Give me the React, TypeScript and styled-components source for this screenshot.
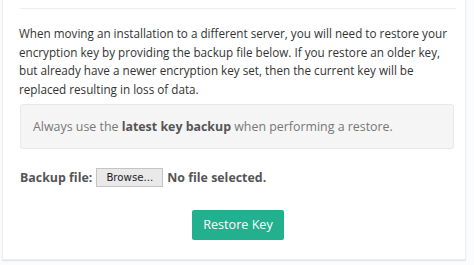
import styled, { createGlobalStyle } from "styled-components";

const GlobalStyle = createGlobalStyle`
  html, body {
    margin: 0;
    padding: 0;
    background: #eef0f3;
  }
  body {
    font-family: "Open Sans", "Liberation Sans", sans-serif;
    width: 474px;
    height: 265px;
    overflow: hidden;
  }
`;

const Page = styled.div`
  display: flex;
  width: 474px;
  height: 265px;
  background: #fbfcfd;
`;

const Card = styled.div`
  box-sizing: border-box;
  width: 464px;
  height: 260px;
  margin-left: 2px;
  background: #ffffff;
  border: 1px solid #eceef0;
  border-top: none;
  box-shadow: 0 1px 1px #e2e5ea;
  padding: 8px 8px 0 16px;
  display: flex;
  flex-flow: column;
`;

const Divider = styled.div`
  height: 1px;
  background: #eceef0;
  margin: 0 1px 0 1px;
`;

const Intro = styled.p`
  margin: 15px 0 0 0;
  font-size: 11.7px;
  line-height: 18.7px;
  color: #333333;
`;

const Note = styled.div`
  box-sizing: border-box;
  margin: 5px 3px 0 1px;
  height: 45px;
  background: #f5f5f5;
  border: 1px solid #e8e8e8;
  border-radius: 3px;
  display: flex;
  align-items: center;
  padding-left: 12px;
  font-size: 12.4px;
  color: #777777;

  b {
    color: #555555;
    font-weight: 700;
  }
`;

const FileRow = styled.div`
  display: flex;
  align-items: center;
  margin: 19px 0 0 1px;
  font-size: 12.4px;
  font-weight: 700;
  color: #555555;
  gap: 4px;
`;

const BrowseButton = styled.span`
  box-sizing: border-box;
  height: 19px;
  width: 67px;
  display: inline-flex;
  align-items: center;
  justify-content: center;
  background: #e9e9e9;
  border: 1px solid #c4c4c4;
  font-family: "DejaVu Sans", sans-serif;
  font-weight: 400;
  font-size: 10.2px;
  color: #222222;
`;

const Actions = styled.div`
  display: flex;
  justify-content: center;
  margin-top: 23px;
`;

const RestoreButton = styled.button`
  width: 92px;
  height: 30px;
  border: none;
  border-radius: 2px;
  background: #22b08e;
  color: #ffffff;
  font-family: "Open Sans", "Liberation Sans", sans-serif;
  font-size: 12.6px;
  cursor: pointer;
`;

export default function App() {
  return (
    <>
      <GlobalStyle />
      <Page>
        <Card>
          <Divider />
          <Intro>
            When moving an installation to a different server, you will need to
            restore your encryption key by providing the backup file below. If
            you restore an older key, but already have a newer encryption key
            set, then the current key will be replaced resulting in loss of
            data.
          </Intro>
          <Note>
            <span>
              Always use the <b>latest key backup</b> when performing a restore.
            </span>
          </Note>
          <FileRow>
            <span>Backup file:</span>
            <BrowseButton>Browse...</BrowseButton>
            <span>No file selected.</span>
          </FileRow>
          <Actions>
            <RestoreButton>Restore Key</RestoreButton>
          </Actions>
        </Card>
      </Page>
    </>
  );
}
